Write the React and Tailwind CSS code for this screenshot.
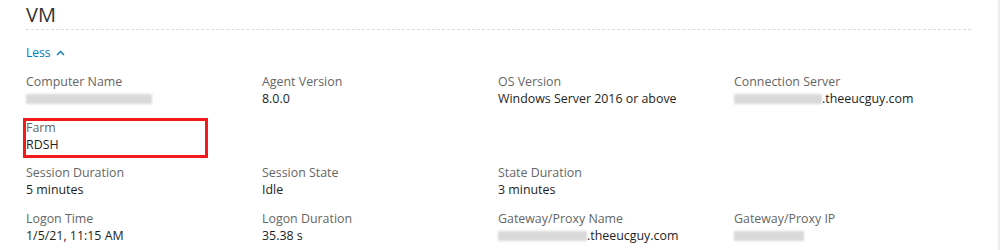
import React from "react";

function Blur({ w }) {
    // redacted value, drawn as a soft grey smear
    return (
        <span
            className="inline-block h-[10px] align-[-1px] bg-[#d9d9d9] blur-[1px]"
            style={{ width: w }}
        />
    );
}

function Field({ label, children }) {
    return (
        <div className="flex flex-col">
            <span className="text-[12.4px] leading-[17px] text-[#666666]">{label}</span>
            <span className="text-[12.4px] leading-[17px] text-[#1e1e1e]">{children}</span>
        </div>
    );
}

export default function App() {
    const rows = [
        [
            { label: "Computer Name", value: <Blur w={126} /> },
            { label: "Agent Version", value: "8.0.0" },
            { label: "OS Version", value: "Windows Server 2016 or above" },
            {
                label: "Connection Server",
                value: (
                    <>
                        <Blur w={88} />
                        .theeucguy.com
                    </>
                ),
            },
        ],
        [{ label: "Farm", value: "RDSH" }],
        [
            { label: "Session Duration", value: "5 minutes" },
            { label: "Session State", value: "Idle" },
            { label: "State Duration", value: "3 minutes" },
        ],
        [
            { label: "Logon Time", value: "1/5/21, 11:15 AM" },
            { label: "Logon Duration", value: "35.38 s" },
            {
                label: "Gateway/Proxy Name",
                value: (
                    <>
                        <Blur w={89} />
                        .theeucguy.com
                    </>
                ),
            },
            { label: "Gateway/Proxy IP", value: <Blur w={70} /> },
        ],
    ];

    return (
        <div
            className="relative h-[250px] w-full overflow-hidden bg-white border-r-2 border-[#ececec]"
            style={{ fontFamily: '"Open Sans", "Noto Sans", sans-serif' }}
        >
            <div className="pl-[26px] pr-[27px]">
                <div className="pt-[3px] pb-[2px] border-b border-dashed border-[#dcdcdc]">
                    <h2 className="text-[20px] leading-[24px] font-normal text-[#333333]">VM</h2>
                </div>

                <button className="mt-[15px] flex items-center gap-[6px] text-[12px] leading-[16px] text-[#0079b8]">
                    Less
                    <svg width="9" height="6" viewBox="0 0 9 6" fill="none">
                        <path d="M1 5L4.5 1.5L8 5" stroke="#0079b8" strokeWidth="1.4" />
                    </svg>
                </button>

                <div className="mt-[12px] flex flex-col gap-[11.5px]">
                    {rows.map((row, i) => (
                        <div key={i} className="grid grid-cols-[236px_236px_236px_1fr]">
                            {row.map((f) => (
                                <Field key={f.label} label={f.label}>
                                    {f.value}
                                </Field>
                            ))}
                        </div>
                    ))}
                </div>
            </div>

            {/* annotation box round the Farm field */}
            <div className="absolute left-[23px] top-[118px] h-[40px] w-[185px] border-[3px] border-[#f21a1a]" />
        </div>
    );
}
